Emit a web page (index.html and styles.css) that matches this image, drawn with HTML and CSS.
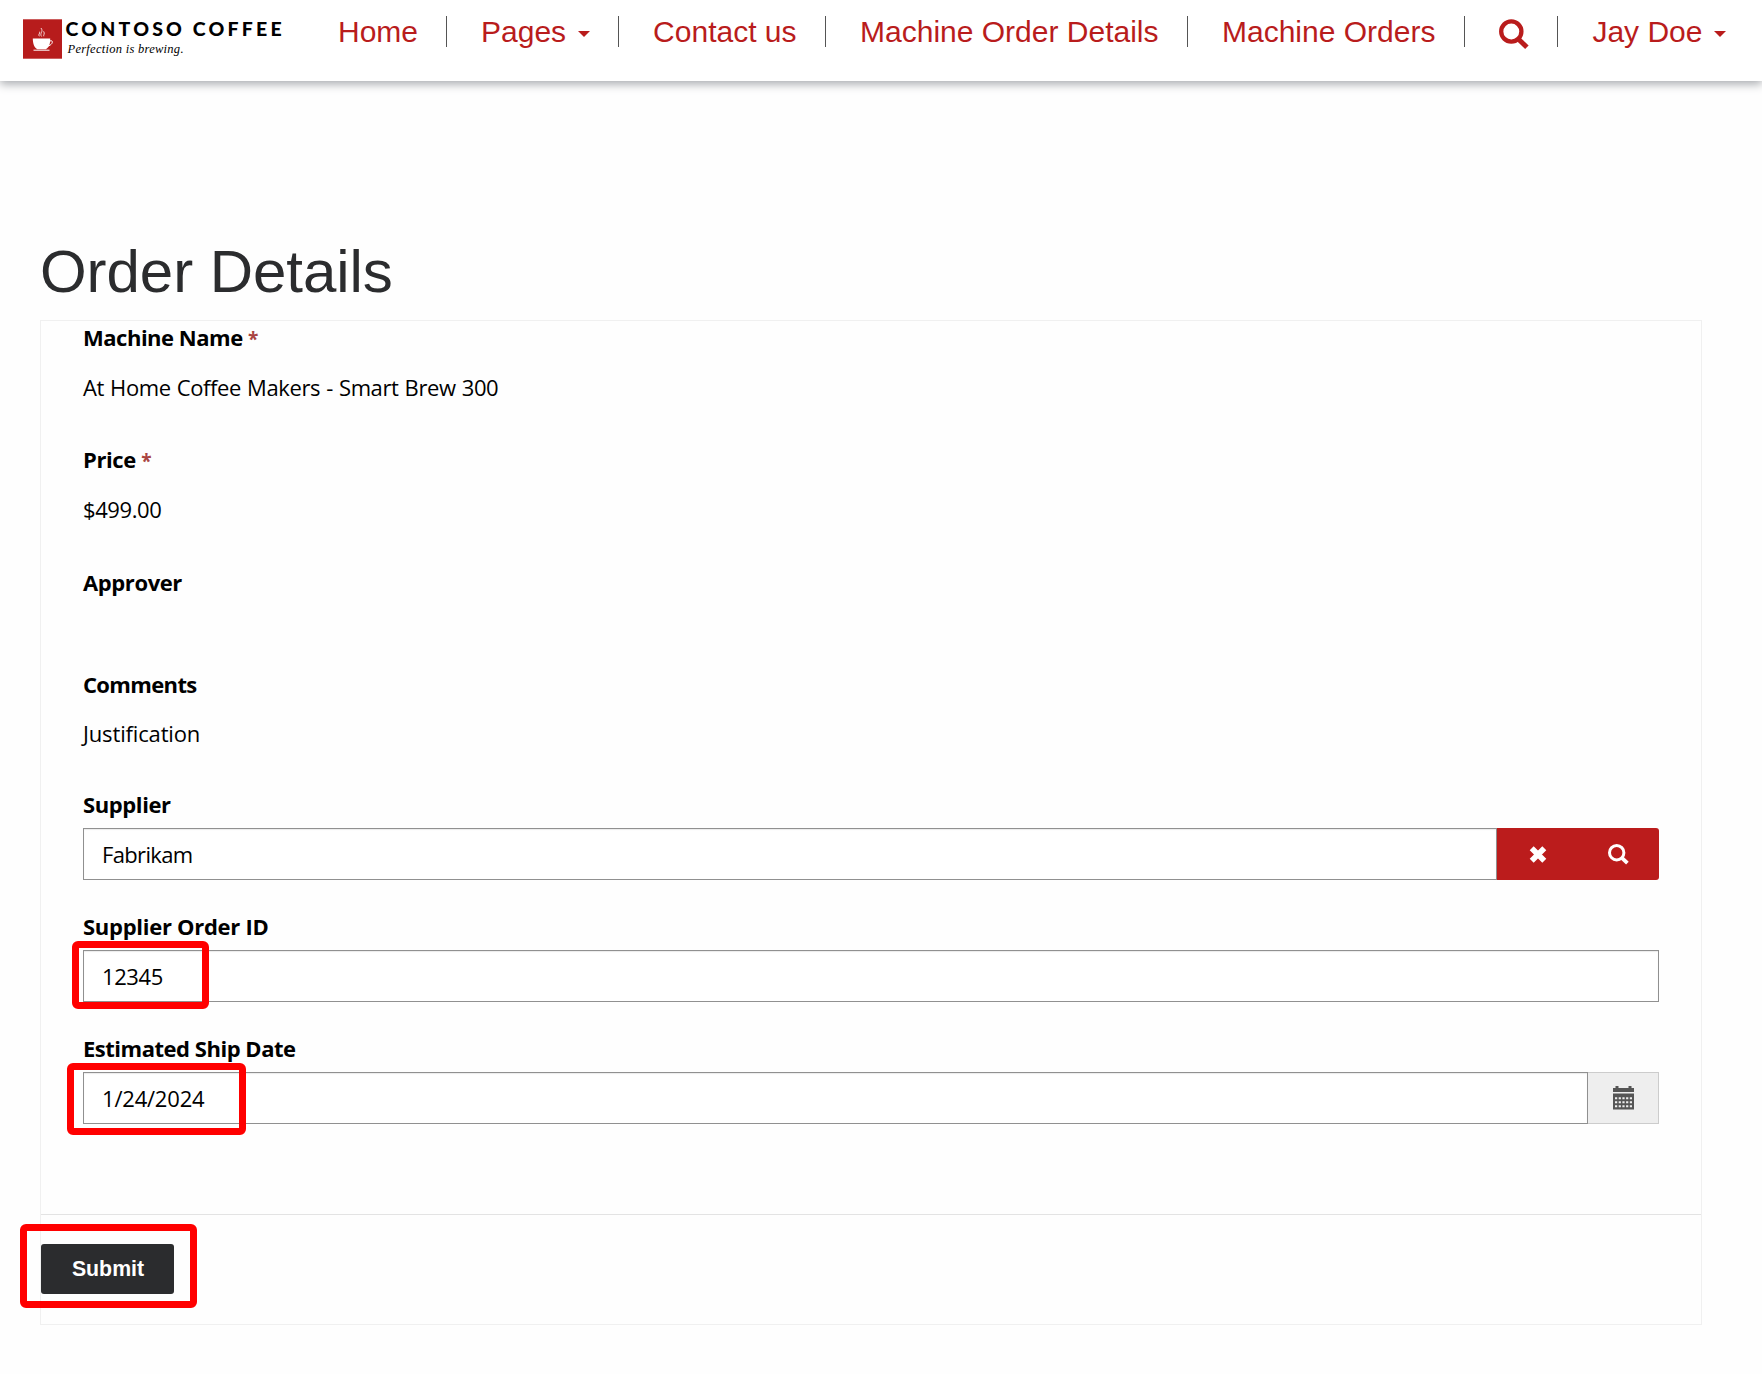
FILE: index.html
```html
<!DOCTYPE html>
<html lang="en">
<head>
<meta charset="utf-8">
<title>Order Details</title>
<link rel="stylesheet" href="styles.css">
</head>
<body>
<header class="navbar">
  <a class="brand">
    <svg width="264" height="44" viewBox="0 0 264 44">
      <rect x="0" y="2.3" width="39" height="39.4" fill="#b71c1c"/>
      <path d="M9.8 21.5h17.4c.2 6-1.7 9.3-4.3 10.7h-8.6c-2.7-1.500-4.500-5-4.500-10.700z" fill="#fff"/>
      <path d="M27 24c3.300-1.600 3.600 3.700-2.500 5.200M10.500 33.200h16" fill="none" stroke="#fff" stroke-width="1"/>
      <path d="M16.400 19.300c-1.800-2 1-2.600.3-4.600M18.600 19.500c-2.500-3.300 2.300-4.500-.6-8.500M20.800 19.300c-.7-1.500 1.500-2.300-.2-5" fill="none" stroke="#fff" stroke-width=".8"/>
      <text class="brand-name" x="42.600" y="18.600" textLength="216">CONTOSO COFFEE</text>
      <text class="brand-tag" x="44.500" y="36.200" textLength="116">Perfection is brewing.</text>
    </svg>
  </a>
  <nav class="menu">
    <a class="menu-item">Home</a>
    <a class="menu-item">Pages<span class="caret"></span></a>
    <a class="menu-item">Contact us</a>
    <a class="menu-item">Machine Order Details</a>
    <a class="menu-item">Machine Orders</a>
    <a class="menu-item"><svg class="menu-search" width="30" height="31" viewBox="0 0 30 31"><circle cx="12.300" cy="12.500" r="10.100" fill="none" stroke="currentColor" stroke-width="4.300"/><path d="M19.300 20l8.600 8.300" stroke="currentColor" stroke-width="5"/></svg></a>
    <a class="menu-item">Jay Doe<span class="caret"></span></a>
  </nav>
</header>
<main class="page">
  <h1 class="title">Order Details</h1>
  <section class="panel">
    <div class="fields">
      <div class="field name"><div class="label label-name">Machine Name <span class="required">*</span></div><div class="value value-name">At Home Coffee Makers - Smart Brew 300</div></div>
      <div class="field price"><div class="label">Price <span class="required">*</span></div><div class="value">$499.00</div></div>
      <div class="field approver"><div class="label">Approver</div></div>
      <div class="field comments"><div class="label label-comments">Comments</div><div class="value">Justification</div></div>
      <div class="field"><div class="label">Supplier</div>
        <div class="control"><div class="input input-supplier">Fabrikam</div>
          <div class="lookup">
            <button class="lookup-btn"><svg width="18" height="17" viewBox="0 0 18 17"><path d="M2.700 2.200l12.600 12.600M15.300 2.200L2.700 14.800" stroke="#fff" stroke-width="5.600"/></svg></button>
            <button class="lookup-btn"><svg width="21" height="21" viewBox="0 0 21 21"><circle cx="8.700" cy="8.700" r="7.200" fill="none" stroke="#fff" stroke-width="3"/><path d="M13.600 13.600l5.800 5.600" stroke="#fff" stroke-width="3.800"/></svg></button>
          </div>
        </div>
      </div>
      <div class="field"><div class="label label-order">Supplier Order ID</div>
        <div class="control"><div class="input">12345</div><span class="mark mark-order"></span></div>
      </div>
      <div class="field"><div class="label label-date">Estimated Ship Date</div>
        <div class="control"><div class="input input-date">1/24/2024</div>
          <div class="addon"><svg width="21" height="24" viewBox="0 0 21 24"><path d="M2.500 2V0h3v2h10V0h3v2H21v4H0V2zM0 7.500h21v16H0z" fill="#555"/><path d="M2 12.300h17M2 16.300h17M2 20.300h17" stroke="#eee" stroke-width="2" stroke-dasharray="2.200 1.500"/></svg></div>
          <span class="mark mark-date"></span>
        </div>
      </div>
    </div>
    <div class="actions"><button class="submit">Submit</button><span class="mark mark-submit"></span></div>
  </section>
</main>
</body>
</html>
```
FILE: styles.css
```css
* { box-sizing: border-box; }
body { margin: 0; background: #fefefe; color: #000; font-family: "Open Sans", "Noto Sans", sans-serif; font-size: 22px; }
.navbar { height: 81px; display: flex; align-items: flex-start; background: #fff; box-shadow: 0 3px 9px #a6a9ad; font-family: "Liberation Sans", Arial, sans-serif; }
.brand { display: block; width: 304px; padding: 17px 0 0 23px; }
.brand svg { display: block; }
.brand-name { font: 900 19.500px Lato, sans-serif; }
.brand-tag { font: italic 12.500px "Liberation Serif", serif; }
.menu { display: flex; }
.menu-item { height: 31px; margin-top: 16px; padding: 0 28.500px 0 34px; display: flex; align-items: center; border-right: 1px solid #555; color: #b91c1c; font-size: 30px; line-height: 30px; white-space: nowrap; }
.menu-item:first-child { padding-right: 28px; }
.menu-item:last-child { border: 0; }
.menu-search { margin-top: 5px; }
.caret { width: 12px; margin: 5px 0 0 11.500px; border: 6px solid transparent; border-top-color: #b91c1c; border-bottom: 0; }
.page { padding: 156px 60px 0 40px; }
.title { margin: 0; height: 83px; font: 400 60px/70px "Liberation Sans", Arial, sans-serif; letter-spacing: -.05px; color: #2b2c2e; }
.panel { width: 1662px; border: 1px solid #f0f0f0; }
.fields { height: 894px; padding: 1px 42px 0; border-bottom: 1px solid #e3e3e3; }
.field { height: 122px; }
.price { height: 123px; }
.approver { height: 102px; }
.comments { height: 120px; }
.label { height: 30px; line-height: 30px; font-weight: 700; letter-spacing: -.4px; white-space: pre; }
.label-name, .label-date { letter-spacing: -.48px; }
.label-comments { letter-spacing: -.65px; }
.label-order { letter-spacing: -.28px; }
.value { margin-top: 20px; line-height: 30px; letter-spacing: -.4px; }
.value-name { word-spacing: .8px; }
.comments .value { margin-top: 19px; letter-spacing: -.15px; }
.required { color: #a94442; font-size: 19px; line-height: 1; }
.control { position: relative; display: flex; height: 52px; margin-top: 9px; }
.input { flex: 1; border: 1px solid #909090; padding: 0 18px; line-height: 51px; background: #fff; box-shadow: inset 0 1px 1px rgba(0,0,0,.08); letter-spacing: -.4px; }
.input-supplier { letter-spacing: -.65px; }
.input-date { letter-spacing: -.2px; }
.lookup { display: flex; width: 162px; background: #bb1c1c; border-radius: 0 3px 3px 0; }
.lookup-btn { width: 81px; padding: 0; border: 0; background: none; display: flex; align-items: center; justify-content: center; }
.addon { width: 71px; border: 1px solid #ccc; border-left: 0; background: #eee; display: flex; align-items: center; justify-content: center; }
.actions { position: relative; height: 109px; padding-top: 29px; }
.submit { display: block; width: 133px; height: 50px; padding: 0 0 0 1px; border: 0; border-radius: 3px; background: #2b2c2e; color: #fff; font: 700 21.300px "Liberation Sans", Arial, sans-serif; }
.mark { position: absolute; border: 7px solid #f00; border-radius: 6px; }
.mark-order { left: -11px; top: -9px; width: 137px; height: 68px; }
.mark-date { left: -16px; top: -9px; width: 179px; height: 72px; }
.mark-submit { left: -21px; top: 9px; width: 177px; height: 84px; }
```
